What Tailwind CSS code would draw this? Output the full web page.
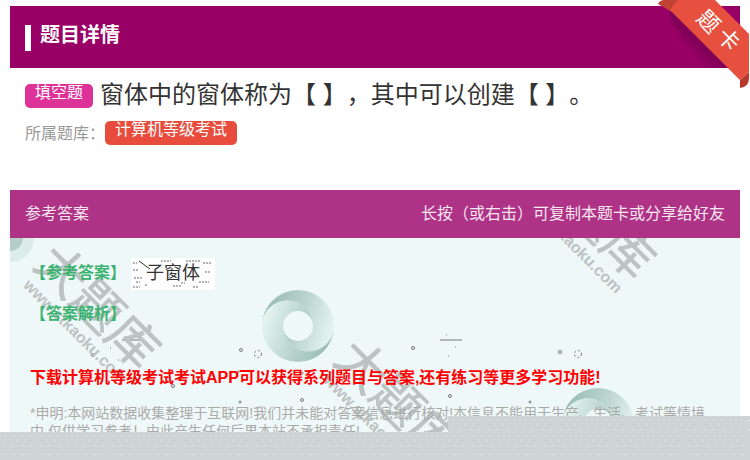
<!DOCTYPE html>
<html lang="zh-CN">

<head>
  <meta charset="UTF-8">
  <title>题目详情</title>
  <script src="https://cdn.jsdelivr.net/npm/@tailwindcss/browser@4"></script>
</head>

<body class="relative w-[750px] h-[460px] overflow-hidden bg-white font-['Liberation_Sans','Noto_Sans_CJK_SC',sans-serif] [text-spacing-trim:space-all]">
  <div class="px-[10px] pt-[6px]">
    <!-- header -->
    <div class="h-[62px] bg-[#990066] flex items-center pl-[15px] gap-[9px]">
      <div class="w-[6px] h-[26px] bg-white mt-[1px]"></div>
      <h1 class="text-[20px] font-bold text-white mb-[4px]">题目详情</h1>
    </div>

    <!-- question -->
    <div class="pl-[15px] pt-[10px] h-[122px]">
      <div class="flex items-center h-[32px]">
        <span class="w-[68px] h-[24px] mt-[4px] rounded-[5px] bg-[#DD3399] text-white text-[16px] leading-[18px] text-center shrink-0">填空题</span>
        <span class="ml-[7px] mt-[2px] text-[24px] text-[#333] whitespace-pre">窗体中的窗体称为【 】，其中可以创建【 】。</span>
      </div>
      <div class="flex items-start mt-[11px] h-[24px]">
        <span class="w-[80px] mt-[1px] text-[16px] text-[#999] whitespace-nowrap">所属题库：</span>
        <span class="w-[132px] h-[24px] rounded-[5px] bg-[#E74C3C] text-white text-[16px] leading-[18px] text-center">计算机等级考试</span>
      </div>
    </div>

    <!-- answer bar -->
    <div class="h-[48px] bg-[#AE3386] flex items-center justify-between px-[15px] text-[16px] text-[#f5e6f0]">
      <span>参考答案</span>
      <span>长按（或右击）可复制本题卡或分享给好友</span>
    </div>

    <!-- answer body -->
    <div class="relative h-[222px] bg-[#EFF8F8] overflow-hidden pl-[20px] text-[#333]">
      <!-- corner swirl -->
      <svg class="absolute left-[-38px] top-[-38px]" width="76" height="76" viewBox="-38 -38 76 76">
        <circle r="24" fill="#dcecE9" />
        <circle r="13" fill="#b4cdc8" />
      </svg>
      <!-- big swirl -->
      <svg class="absolute left-[250px] top-[50px]" width="76" height="76" viewBox="-38 -38 76 76">
        <defs>
          <linearGradient id="blade" gradientUnits="userSpaceOnUse" x1="-30" y1="-12" x2="36" y2="8">
            <stop offset="0" stop-color="#9dbfb9" />
            <stop offset="0.45" stop-color="#b9d3ce" />
            <stop offset="1" stop-color="#e8f6f3" />
          </linearGradient>
        </defs>
        <path fill="url(#blade)" d="M-36 0 A25.5 25.5 0 0 1 15 0 A15 15 0 0 1 -15 0 A25.5 25.5 0 0 0 36 0 A36 36 0 0 0 -36 0 Z" />
        <path fill="url(#blade)" transform="rotate(180)" d="M-36 0 A25.5 25.5 0 0 1 15 0 A15 15 0 0 1 -15 0 A25.5 25.5 0 0 0 36 0 A36 36 0 0 0 -36 0 Z" />
      </svg>
      <!-- lower swirl -->
      <svg class="absolute left-[550px] top-[148px]" width="76" height="76" viewBox="-38 -38 76 76">
        <path fill="url(#blade)" d="M-36 0 A25.5 25.5 0 0 1 15 0 A15 15 0 0 1 -15 0 A25.5 25.5 0 0 0 36 0 A36 36 0 0 0 -36 0 Z" />
        <path fill="url(#blade)" transform="rotate(180)" d="M-36 0 A25.5 25.5 0 0 1 15 0 A15 15 0 0 1 -15 0 A25.5 25.5 0 0 0 36 0 A36 36 0 0 0 -36 0 Z" />
      </svg>
      <!-- specks -->
      <svg class="absolute left-0 top-0" width="730" height="222" fill="none" stroke="#777" stroke-width="1">
        <circle cx="231" cy="112" r="1.5" />
        <circle cx="248" cy="116" r="3.5" stroke-dasharray="2 2" />
        <path d="M112 102h22M100 110h1M122 116h1M108 122h1" />
        <circle cx="83" cy="117" r="1.5" />
        <circle cx="228" cy="134" r="1" />
        <circle cx="292" cy="135" r="1" />
        <circle cx="163" cy="148" r="1.5" />
        <circle cx="292" cy="162" r="1.5" />
        <circle cx="230" cy="164" r="1" />
        <path d="M430 102h22M436 97h1M445 109h1M438 118h1" />
        <circle cx="403" cy="110" r="1.5" />
        <circle cx="550" cy="114" r="1.5" />
        <circle cx="568" cy="116" r="3.5" stroke-dasharray="2 2" />
        <circle cx="440" cy="158" r="1.5" />
        <circle cx="520" cy="164" r="1" />
      </svg>

      <!-- watermarks -->
      <div class="absolute left-[-25px] top-[41px] w-[200px] h-[80px] rotate-45 text-[#bcc3c3] text-center">
        <div class="text-[50px] leading-[46px] [-webkit-text-stroke:0.6px_#bcc3c3] whitespace-nowrap">大题库</div>
        <div class="ml-[4px] text-[16px] leading-[20px] font-bold whitespace-nowrap">www.stkaoku.com</div>
      </div>
      <div class="absolute left-[275px] top-[136px] w-[200px] h-[80px] rotate-45 text-[#bcc3c3] text-center">
        <div class="text-[50px] leading-[46px] [-webkit-text-stroke:0.6px_#bcc3c3] whitespace-nowrap">大题库</div>
        <div class="ml-[4px] text-[16px] leading-[20px] font-bold whitespace-nowrap">www.stkaoku.com</div>
      </div>
      <div class="absolute left-[470px] top-[-49px] w-[200px] h-[80px] rotate-45 text-[#bcc3c3] text-center">
        <div class="text-[50px] leading-[46px] [-webkit-text-stroke:0.6px_#bcc3c3] whitespace-nowrap">大题库</div>
        <div class="ml-[4px] text-[16px] leading-[20px] font-bold whitespace-nowrap">www.stkaoku.com</div>
      </div>

      <div class="relative flex items-center pt-[20px] h-[52px]">
        <span class="w-[101px] -mt-[2px] text-[16px] font-bold text-[#3CB371] whitespace-nowrap">【参考答案】</span>
        <span class="relative w-[84px] h-[32px] bg-white text-[18px] text-center leading-[30px] overflow-hidden">子窗体
          <svg class="absolute left-0 top-0" width="84" height="32" fill="none" stroke="#666" stroke-dasharray="2 1">
            <path d="M8 3l11 8" stroke="#333" stroke-dasharray="none" />
            <path d="M2 5h4M3 20h8M5 24h4M14 27h3M2 12h6M42 28h8M50 25h4M72 5h8M68 24h10M74 14h6M2 29h7M30 3h10M55 3h14M62 29h6" />
          </svg>
        </span>
      </div>
      <div class="relative pt-[13px] text-[16px] font-bold text-[#3CB371] whitespace-nowrap leading-[22px]">【答案解析】</div>
      <p class="relative mt-[41px] text-[16px] font-bold text-[#ff0000] whitespace-nowrap leading-[24px]">下载计算机等级考试考试APP可以获得系列题目与答案,还有练习等更多学习功能!</p>
      <p class="relative mt-[14px] w-[680px] text-[14px] leading-[18px] text-[#aaa]">*申明:本网站数据收集整理于互联网!我们并未能对答案信息进行核对!本信息不能用于生产、生活、考试等情境中,仅供学习参考！由此产生任何后果本站不承担责任!</p>
    </div>
  </div>

  <!-- ribbon -->
  <svg class="absolute right-0 top-0" width="100" height="95" viewBox="0 0 100 95">
    <defs>
      <linearGradient id="shade" gradientUnits="userSpaceOnUse" x1="50" y1="40" x2="36" y2="54">
        <stop offset="0" stop-color="#4a0036" stop-opacity="0.35" />
        <stop offset="1" stop-color="#4a0036" stop-opacity="0" />
      </linearGradient>
    </defs>
    <path d="M20 10L90 80V68H54L20 22Z" fill="url(#shade)" />
    <path d="M8 4Q10 0 14 0H30L22 12Z" fill="#c04335" />
    <path d="M90 80L99 72V78Q99 87 90 88Z" fill="#b8392c" />
    <path d="M28 0H65L99 34V72L90 80L20 10Z" fill="#E74F3E" />
    <text x="58" y="29" transform="rotate(45 58 22)" text-anchor="middle" font-size="22" fill="#fff">题</text>
    <text x="78" y="47" transform="rotate(45 78 40)" text-anchor="middle" font-size="22" fill="#fff">卡</text>
  </svg>

  <!-- dotted footer overlay -->
  <div class="absolute left-[448px] right-0 top-[416px] h-[16px] bg-[#CFD4D4] bg-[radial-gradient(#f2f4f4_0.8px,transparent_1px)] bg-[size:9px_9px]"></div>
  <div class="absolute left-0 right-0 top-[432px] bottom-0 bg-[#CFD4D4] bg-[radial-gradient(#f2f4f4_0.8px,transparent_1px)] bg-[size:9px_9px]"></div>
</body>

</html>
